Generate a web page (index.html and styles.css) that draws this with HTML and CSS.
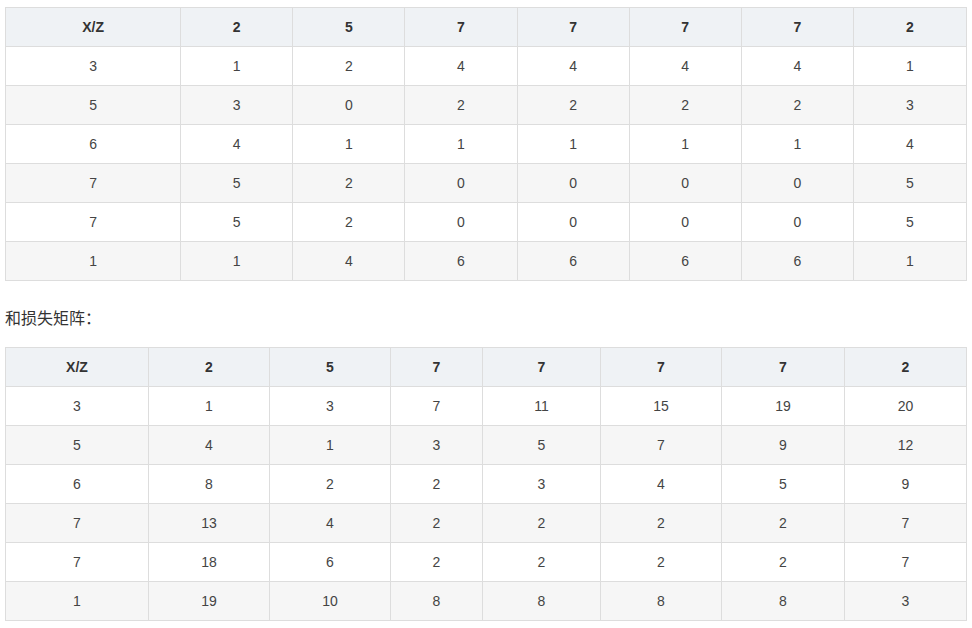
FILE: index.html
```html
<!DOCTYPE html>
<html lang="zh">
<head>
<meta charset="utf-8">
<link rel="stylesheet" href="styles.css">
</head>
<body>
<div class="page">
<table class="grid t1">
<colgroup><col class="c1"><col class="c2"><col class="c3"><col class="c4"><col class="c5"><col class="c6"><col class="c7"><col class="c8"></colgroup>
<thead><tr><th>X/Z</th><th>2</th><th>5</th><th>7</th><th>7</th><th>7</th><th>7</th><th>2</th></tr></thead>
<tbody>
<tr><td>3</td><td>1</td><td>2</td><td>4</td><td>4</td><td>4</td><td>4</td><td>1</td></tr>
<tr><td>5</td><td>3</td><td>0</td><td>2</td><td>2</td><td>2</td><td>2</td><td>3</td></tr>
<tr><td>6</td><td>4</td><td>1</td><td>1</td><td>1</td><td>1</td><td>1</td><td>4</td></tr>
<tr><td>7</td><td>5</td><td>2</td><td>0</td><td>0</td><td>0</td><td>0</td><td>5</td></tr>
<tr><td>7</td><td>5</td><td>2</td><td>0</td><td>0</td><td>0</td><td>0</td><td>5</td></tr>
<tr><td>1</td><td>1</td><td>4</td><td>6</td><td>6</td><td>6</td><td>6</td><td>1</td></tr>
</tbody>
</table>
<p class="note">和损失矩阵：</p>
<table class="grid t2">
<colgroup><col class="c1"><col class="c2"><col class="c3"><col class="c4"><col class="c5"><col class="c6"><col class="c7"><col class="c8"></colgroup>
<thead><tr><th>X/Z</th><th>2</th><th>5</th><th>7</th><th>7</th><th>7</th><th>7</th><th>2</th></tr></thead>
<tbody>
<tr><td>3</td><td>1</td><td>3</td><td>7</td><td>11</td><td>15</td><td>19</td><td>20</td></tr>
<tr><td>5</td><td>4</td><td>1</td><td>3</td><td>5</td><td>7</td><td>9</td><td>12</td></tr>
<tr><td>6</td><td>8</td><td>2</td><td>2</td><td>3</td><td>4</td><td>5</td><td>9</td></tr>
<tr><td>7</td><td>13</td><td>4</td><td>2</td><td>2</td><td>2</td><td>2</td><td>7</td></tr>
<tr><td>7</td><td>18</td><td>6</td><td>2</td><td>2</td><td>2</td><td>2</td><td>7</td></tr>
<tr><td>1</td><td>19</td><td>10</td><td>8</td><td>8</td><td>8</td><td>8</td><td>3</td></tr>
</tbody>
</table>
</div>
</body>
</html>
```
FILE: styles.css
```css
html, body {
  margin: 0;
  padding: 0;
  background: #fff;
}
.page {
  padding: 7px 5px 0 5px;
  width: 962px;
  font-family: "Liberation Sans", Arial, "Noto Sans CJK SC", sans-serif;
  color: #444;
}
.grid {
  border-collapse: collapse;
  table-layout: fixed;
  width: 962px;
  font-size: 14px;
}
.grid th, .grid td {
  border: 1px solid #dddddd;
  text-align: center;
  height: 39px;
  padding: 0 8px;
  box-sizing: border-box;
  line-height: 16px;
}
.grid th {
  background: #eff2f5;
  color: #333;
  font-weight: bold;
}
.grid tbody tr:nth-child(even) td {
  background: #f6f6f6;
}
.t1 .c1 { width: 175px; }
.t1 .c2, .t1 .c3, .t1 .c4, .t1 .c5, .t1 .c6, .t1 .c7 { width: 112px; }
.t1 .c8 { width: 113px; }
.t2 .c1 { width: 143px; }
.t2 .c2 { width: 121px; }
.t2 .c3 { width: 121px; }
.t2 .c4 { width: 92px; }
.t2 .c5 { width: 118px; }
.t2 .c6 { width: 121px; }
.t2 .c7 { width: 123px; }
.t2 .c8 { width: 122px; }
.note {
  margin: 0;
  padding: 29px 0 0 0;
  height: 37px;
  font-size: 16px;
  line-height: 18px;
  color: #333;
  font-family: "Liberation Sans", "Noto Sans CJK SC", sans-serif;
}
```
